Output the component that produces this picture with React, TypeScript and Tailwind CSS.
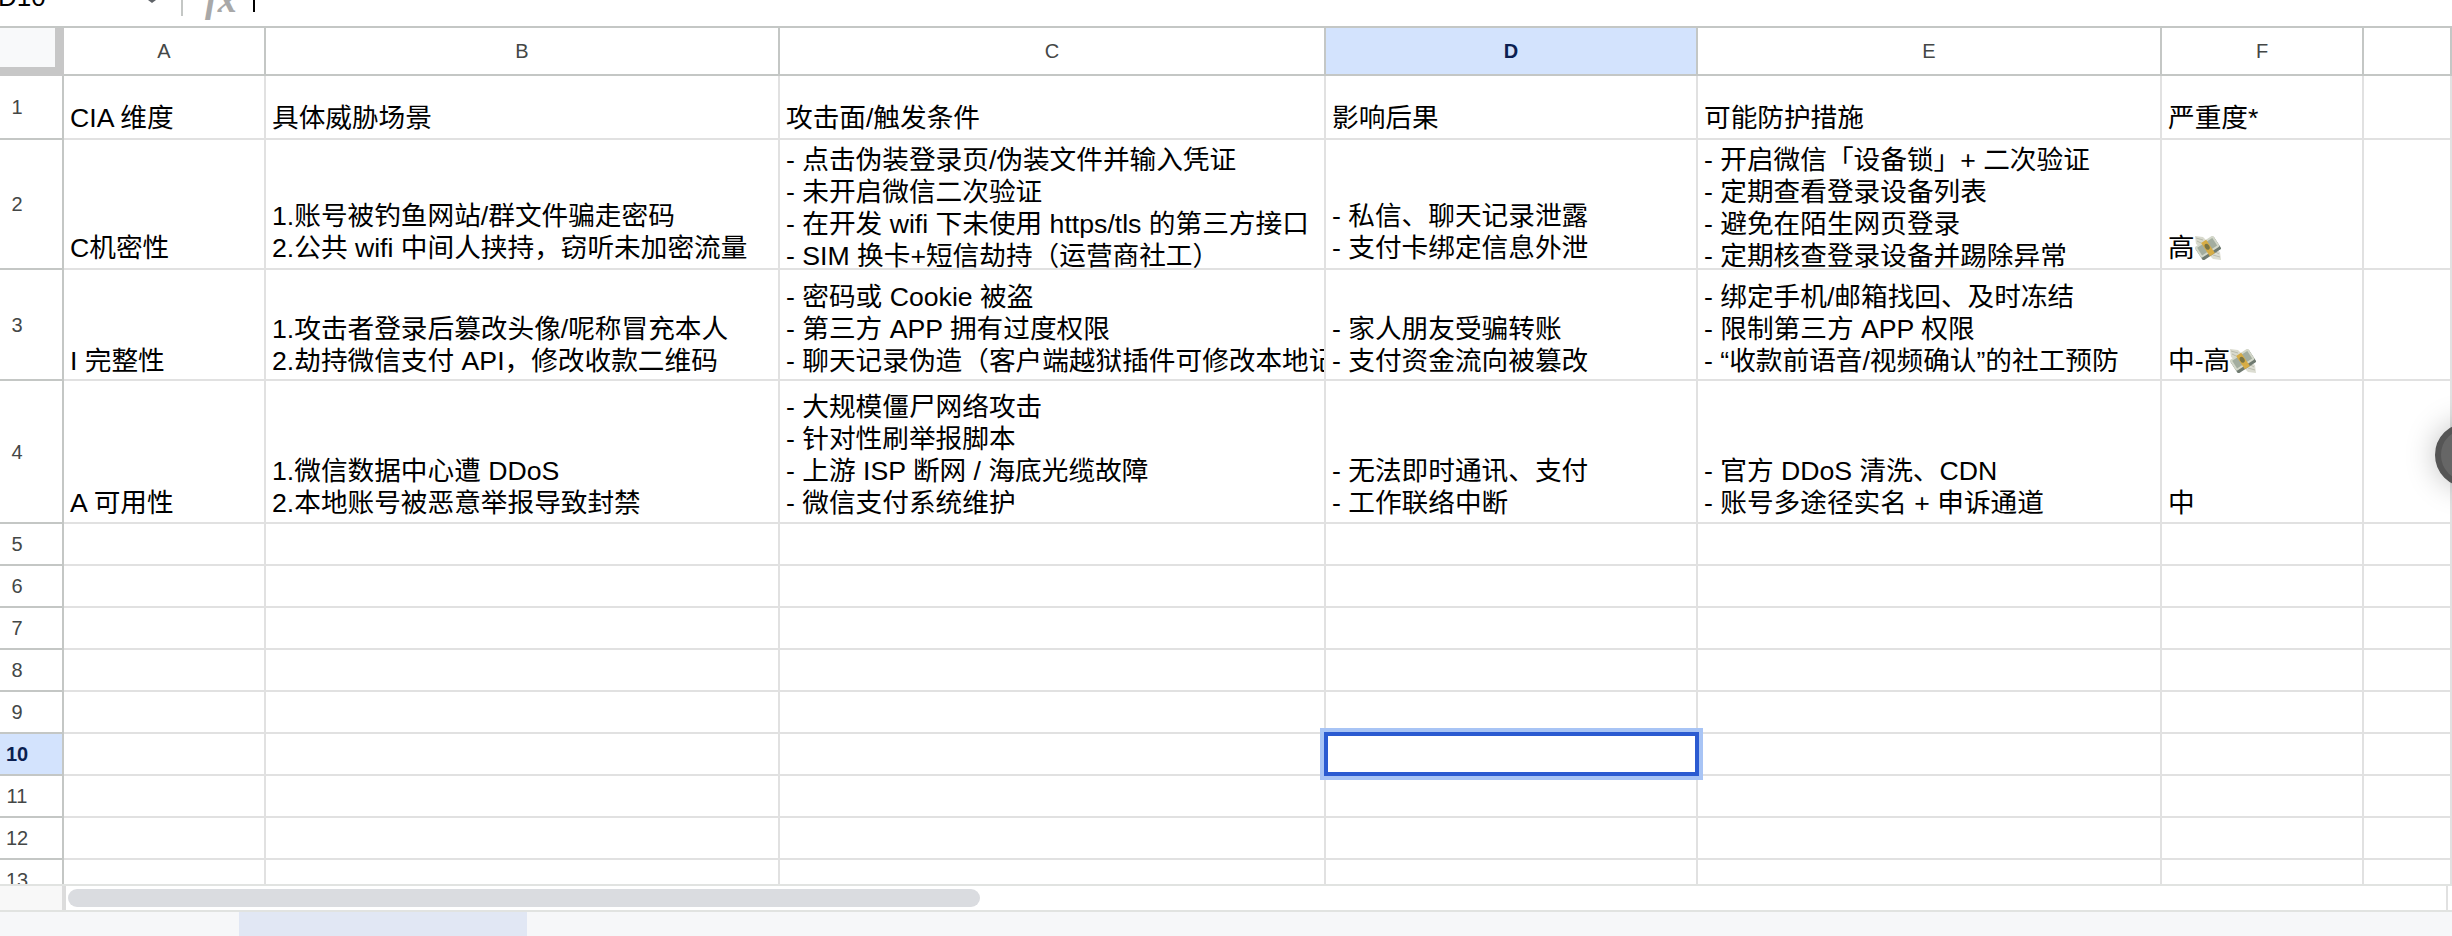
import React from "react";

const grid = "border-r-2 border-b-2 border-[#e1e1e1]";
const cols = ["A", "B", "C", "D", "E", "F", ""];

function MoneyWings() {
  return (
    <svg width="28" height="24" viewBox="0 0 28 24" className="shrink-0 ml-[-1px]">
      <path d="M1 0 L9 1 L15 7 L9 13 L2 8 Z" fill="#d9dacd" />
      <path d="M2 2 L9 4 M3 5 L9 8" stroke="#b0b2a3" strokeWidth="0.8" />
      <path d="M27 24 L19 23 L13 17 L19 11 L26 16 Z" fill="#dcddd2" />
      <path d="M26 21 L19 19 M25 18 L20 15" stroke="#b2b4a6" strokeWidth="0.8" />
      <g transform="rotate(-33 14 12)">
        <rect x="3" y="5" width="22" height="15" rx="1.5" fill="#6f7a70" />
        <rect x="3" y="4" width="22" height="13" rx="1.5" fill="#d3d7c9" />
        <rect x="5" y="6" width="18" height="9" fill="#a3ad9f" />
        <rect x="11" y="4" width="6" height="16" fill="#d6ac45" />
        <ellipse cx="14" cy="10.5" rx="2.2" ry="3.2" fill="#7a7443" />
      </g>
    </svg>
  );
}

type Row = {
  n: number;
  cells: { lines: string[]; top?: boolean; pb?: string; emoji?: boolean }[];
};

const rows: Row[] = [
  {
    n: 1,
    cells: [
      { lines: ["CIA 维度"], pb: "pb-[4px]" },
      { lines: ["具体威胁场景"], pb: "pb-[4px]" },
      { lines: ["攻击面/触发条件"], pb: "pb-[4px]" },
      { lines: ["影响后果"], pb: "pb-[4px]" },
      { lines: ["可能防护措施"], pb: "pb-[4px]" },
      { lines: ["严重度*"], pb: "pb-[4px]" },
      { lines: [] },
    ],
  },
  {
    n: 2,
    cells: [
      { lines: ["C机密性"], pb: "pb-[4px]" },
      { lines: ["1.账号被钓鱼网站/群文件骗走密码", "2.公共 wifi 中间人挟持，窃听未加密流量"], pb: "pb-[4px]" },
      {
        lines: ["- 点击伪装登录页/伪装文件并输入凭证", "- 未开启微信二次验证", "- 在开发 wifi 下未使用 https/tls 的第三方接口", "- SIM 换卡+短信劫持（运营商社工）"],
        top: true,
      },
      { lines: ["- 私信、聊天记录泄露", "- 支付卡绑定信息外泄"], pb: "pb-[4px]" },
      {
        lines: ["- 开启微信「设备锁」+ 二次验证", "- 定期查看登录设备列表", "- 避免在陌生网页登录", "- 定期核查登录设备并踢除异常"],
        top: true,
      },
      { lines: ["高"], emoji: true, pb: "pb-[4px]" },
      { lines: [] },
    ],
  },
  {
    n: 3,
    cells: [
      { lines: ["I 完整性"], pb: "pb-[2px]" },
      { lines: ["1.攻击者登录后篡改头像/呢称冒充本人", "2.劫持微信支付 API，修改收款二维码"], pb: "pb-[2px]" },
      { lines: ["- 密码或 Cookie 被盗", "- 第三方 APP 拥有过度权限", "- 聊天记录伪造（客户端越狱插件可修改本地记录）"], pb: "pb-[2px]" },
      { lines: ["- 家人朋友受骗转账", "- 支付资金流向被篡改"], pb: "pb-[2px]" },
      { lines: ["- 绑定手机/邮箱找回、及时冻结", "- 限制第三方 APP 权限", "- “收款前语音/视频确认”的社工预防"], pb: "pb-[2px]" },
      { lines: ["中-高"], emoji: true, pb: "pb-[2px]" },
      { lines: [] },
    ],
  },
  {
    n: 4,
    cells: [
      { lines: ["A 可用性"], pb: "pb-[3px]" },
      { lines: ["1.微信数据中心遭 DDoS", "2.本地账号被恶意举报导致封禁"], pb: "pb-[3px]" },
      { lines: ["- 大规模僵尸网络攻击", "- 针对性刷举报脚本", "- 上游 ISP 断网 / 海底光缆故障", "- 微信支付系统维护"], pb: "pb-[3px]" },
      { lines: ["- 无法即时通讯、支付", "- 工作联络中断"], pb: "pb-[3px]" },
      { lines: ["- 官方 DDoS 清洗、CDN", "- 账号多途径实名 + 申诉通道"], pb: "pb-[3px]" },
      { lines: ["中"], pb: "pb-[3px]" },
      { lines: [] },
    ],
  },
];

function Gutter({ n, active }: { n: number; active?: boolean }) {
  return (
    <div
      className={
        "flex items-center border-r-2 border-b-2 border-[#c4c7c5] text-[20px] " +
        (active ? "bg-[#d3e3fd] font-bold text-[#0b1f51]" : "bg-white text-[#444746]")
      }
    >
      <span className="w-[34px] text-center">{n}</span>
    </div>
  );
}

function DataCell({ cell }: { cell: Row["cells"][number] }) {
  return (
    <div
      className={
        grid +
        " flex overflow-hidden pl-[6px] text-[26.67px] leading-[32px] whitespace-nowrap text-black " +
        (cell.top ? "items-start pt-[4px] " : "items-end ") +
        (cell.pb ?? "")
      }
    >
      {cell.lines.length > 0 && (
        <div>
          {cell.lines.map((l) => (
            <div key={l} className="flex items-center h-[32px]">
              <span>{l}</span>
              {cell.emoji && <MoneyWings />}
            </div>
          ))}
        </div>
      )}
    </div>
  );
}

export default function App() {
  const blank = [5, 6, 7, 8, 9, 10, 11, 12, 13];
  return (
    <div className="w-[2452px] h-[936px] overflow-hidden bg-white flex flex-col [font-family:'Liberation_Sans','Noto_Sans_CJK_SC',sans-serif]">
      {/* formula bar, cut off by the top of the picture */}
      <div className="h-[28px] shrink-0 border-b-2 border-[#c4c7c5] flex items-end overflow-hidden">
        <div className="h-[26px] w-full flex items-start">
          <span className="text-[26px] leading-[30px] mt-[-18px] ml-[-2px] w-[150px] text-black">D10</span>
          <svg width="10" height="4" viewBox="0 0 10 4" className="ml-[-1px] shrink-0">
            <path d="M1 0 L5 3 L9 0 Z" fill="#5f6368" />
          </svg>
          <div className="w-[2px] h-[16px] bg-[#c4c7c5] ml-[24px] shrink-0" />
          <span className="[font-family:'Liberation_Serif',serif] italic font-bold text-[38px] leading-[30px] mt-[-16px] ml-[22px] w-[48px] text-[#a8a8a8]">
            fx
          </span>
          <div className="w-[2px] h-[12px] bg-black shrink-0" />
        </div>
      </div>

      {/* sheet */}
      <div className="h-[856px] shrink-0 overflow-hidden grid grid-cols-[64px_202px_514px_546px_372px_464px_202px_1fr] grid-rows-[48px_64px_130px_111px_143px_repeat(9,42px)]">
        <div className="bg-[#c7c7c7] pr-[9px] pb-[9px]">
          <div className="w-full h-full bg-[#f8f9fa]" />
        </div>
        {cols.map((c, i) => (
          <div
            key={i}
            className={
              "flex items-center justify-center border-r-2 border-b-2 border-[#c4c7c5] text-[20px] " +
              (c === "D" ? "bg-[#d3e3fd] font-bold text-[#0b1f51]" : "bg-white text-[#444746]")
            }
          >
            {c}
          </div>
        ))}

        {rows.map((r) => (
          <React.Fragment key={r.n}>
            <Gutter n={r.n} />
            {r.cells.map((cell, i) => (
              <DataCell key={i} cell={cell} />
            ))}
          </React.Fragment>
        ))}

        {blank.map((n) => (
          <React.Fragment key={n}>
            <Gutter n={n} active={n === 10} />
            {cols.map((c, i) => (
              <div key={i} className={grid + " relative"}>
                {n === 10 && c === "D" && (
                  <div className="absolute top-[-2px] left-[-2px] right-[-3px] bottom-[-2px] z-10 border-4 border-[#2b5bd1] bg-white shadow-[0_0_0_4px_#a8c4f5]" />
                )}
              </div>
            ))}
          </React.Fragment>
        ))}
      </div>

      {/* horizontal scrollbar */}
      <div className="h-[28px] shrink-0 border-t-2 border-b-2 border-[#e1e3e1] flex bg-white">
        <div className="w-[62px] bg-[#f8f8f8] border-r-4 border-[#dcdcdc] box-content shrink-0" />
        <div className="flex-1 flex items-center pl-[2px] pr-[4px]">
          <div className="w-[912px] h-[18px] rounded-[9px] bg-[#dadce0]" />
          <div className="flex-1" />
          <div className="w-[2px] h-full bg-[#e1e1e1]" />
        </div>
      </div>

      {/* sheet tabs */}
      <div className="flex-1 bg-[#f6f7f9] flex">
        <div className="ml-[239px] w-[288px] bg-[#e1e7f4]" />
      </div>

      {/* floating round button at the right edge */}
      <div className="fixed left-[2435px] top-[423px] w-[64px] h-[64px] rounded-full bg-[#666666] border-[6px] border-[#555555] shadow-[0_0_30px_rgba(0,0,0,0.25)]" />
    </div>
  );
}
